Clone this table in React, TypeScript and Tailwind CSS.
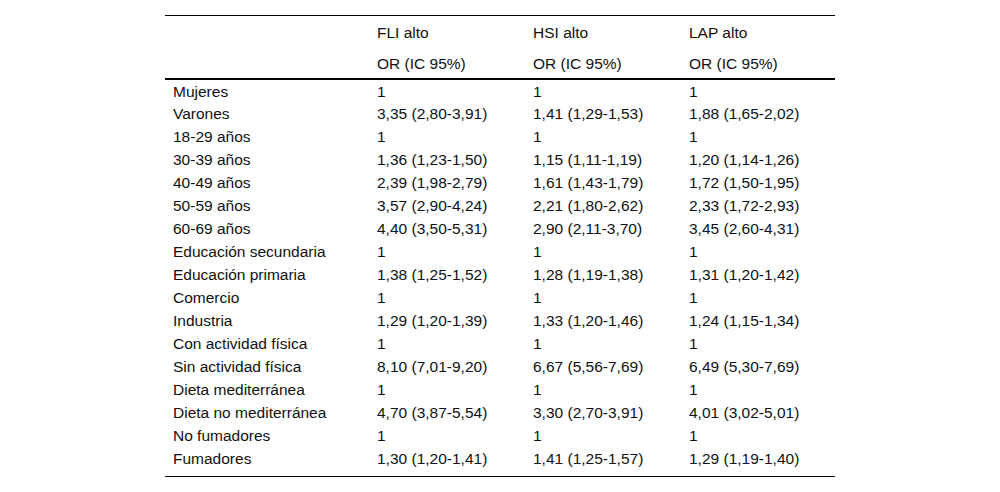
const rows: [string, string, string, string][] = [
  ["Mujeres", "1", "1", "1"],
  ["Varones", "3,35 (2,80-3,91)", "1,41 (1,29-1,53)", "1,88 (1,65-2,02)"],
  ["18-29 años", "1", "1", "1"],
  ["30-39 años", "1,36 (1,23-1,50)", "1,15 (1,11-1,19)", "1,20 (1,14-1,26)"],
  ["40-49 años", "2,39 (1,98-2,79)", "1,61 (1,43-1,79)", "1,72 (1,50-1,95)"],
  ["50-59 años", "3,57 (2,90-4,24)", "2,21 (1,80-2,62)", "2,33 (1,72-2,93)"],
  ["60-69 años", "4,40 (3,50-5,31)", "2,90 (2,11-3,70)", "3,45 (2,60-4,31)"],
  ["Educación secundaria", "1", "1", "1"],
  ["Educación primaria", "1,38 (1,25-1,52)", "1,28 (1,19-1,38)", "1,31 (1,20-1,42)"],
  ["Comercio", "1", "1", "1"],
  ["Industria", "1,29 (1,20-1,39)", "1,33 (1,20-1,46)", "1,24 (1,15-1,34)"],
  ["Con actividad física", "1", "1", "1"],
  ["Sin actividad física", "8,10 (7,01-9,20)", "6,67 (5,56-7,69)", "6,49 (5,30-7,69)"],
  ["Dieta mediterránea", "1", "1", "1"],
  ["Dieta no mediterránea", "4,70 (3,87-5,54)", "3,30 (2,70-3,91)", "4,01 (3,02-5,01)"],
  ["No fumadores", "1", "1", "1"],
  ["Fumadores", "1,30 (1,20-1,41)", "1,41 (1,25-1,57)", "1,29 (1,19-1,40)"],
];

export default function App() {
  return (
    <div className="min-h-[492px] bg-white pt-[15px] font-['Liberation_Sans',Arial,sans-serif] text-[15.5px] leading-[20px] text-[#111]">
      <table className="mx-auto w-[670px] border-collapse border-t border-b border-black">
        <colgroup>
          <col className="w-[204px]" />
          <col className="w-[156px]" />
          <col className="w-[156px]" />
          <col />
        </colgroup>
        <thead>
          {/* encabezados */}
          <tr className="h-[32px]">
            <th />
            <th className="px-2 pt-[2px] text-left font-normal align-middle">FLI alto</th>
            <th className="px-2 pt-[2px] text-left font-normal align-middle">HSI alto</th>
            <th className="px-2 pt-[2px] text-left font-normal align-middle">LAP alto</th>
          </tr>
          <tr className="h-[31px] border-b-2 border-black">
            <th />
            <th className="px-2 pt-[3px] text-left font-normal align-middle">OR (IC 95%)</th>
            <th className="px-2 pt-[3px] text-left font-normal align-middle">OR (IC 95%)</th>
            <th className="px-2 pt-[3px] text-left font-normal align-middle">OR (IC 95%)</th>
          </tr>
        </thead>
        <tbody>
          {rows.map((r, i) => (
            <tr key={r[0]} className={i === rows.length - 1 ? "h-[30px] align-top" : "h-[23px]"}>
              {r.map((c, j) => (
                <td key={j} className={i === rows.length - 1 ? "px-2 pt-[2px]" : "px-2 pt-[2px]"}>
                  {c}
                </td>
              ))}
            </tr>
          ))}
        </tbody>
      </table>
    </div>
  );
}
